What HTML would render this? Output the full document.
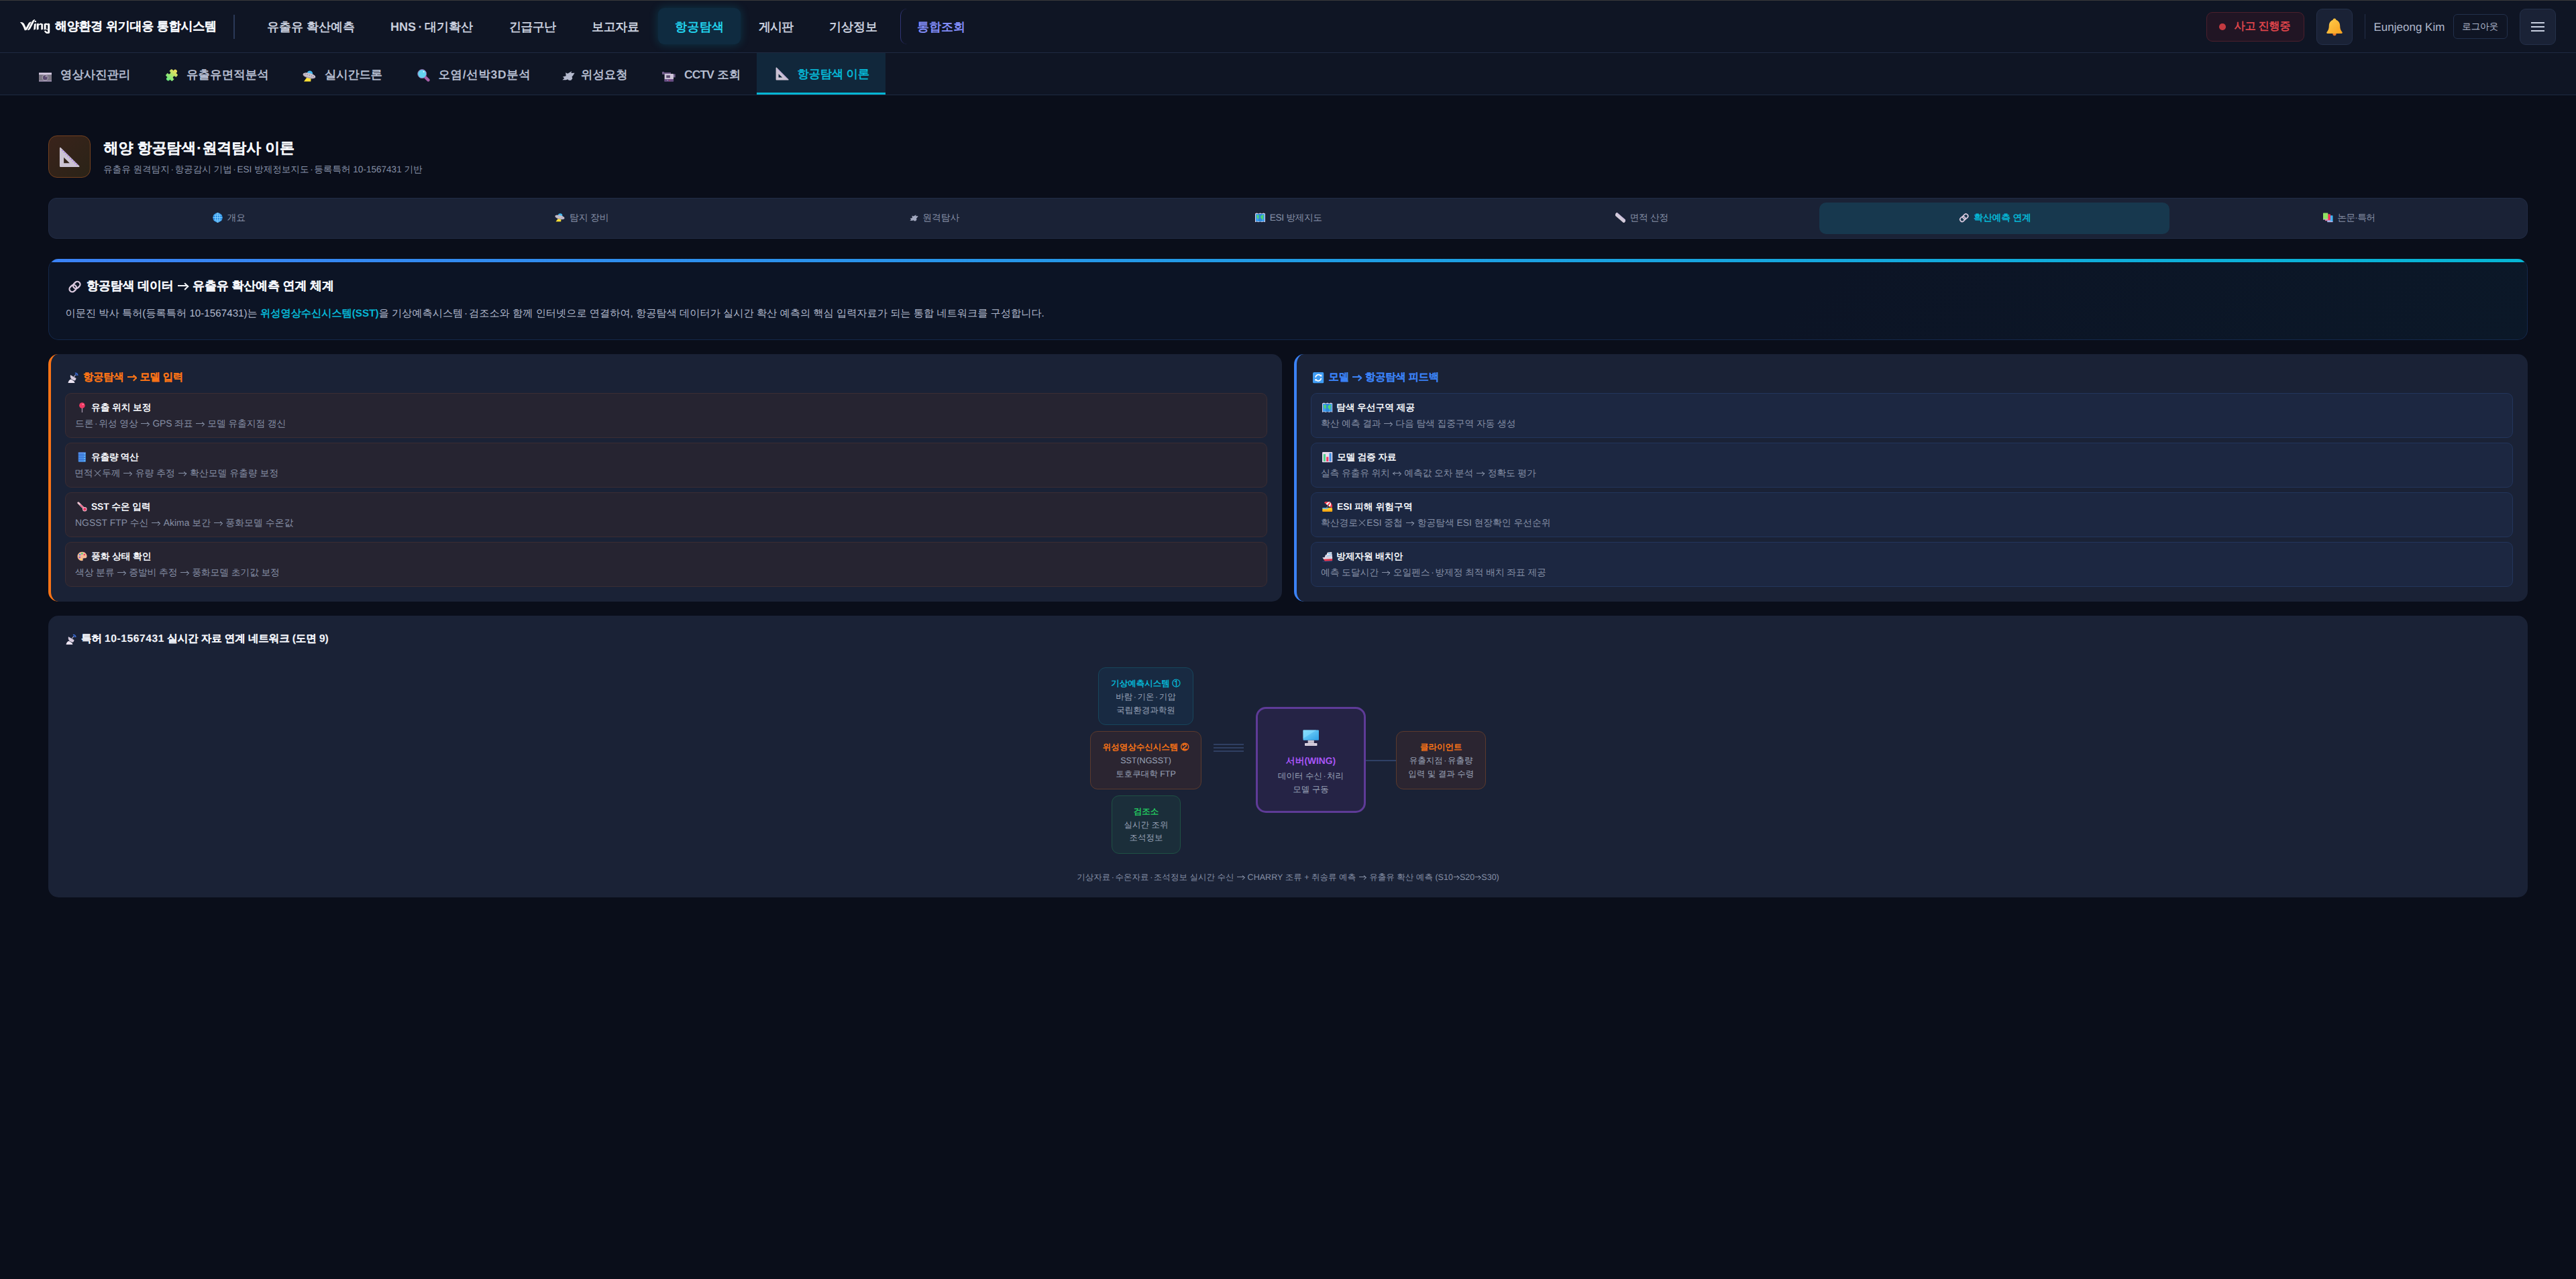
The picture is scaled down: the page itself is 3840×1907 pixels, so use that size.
<!DOCTYPE html>
<html lang="ko">
<head>
<meta charset="utf-8">
<title>해양환경 위기대응 통합시스템</title>
<style>
*{box-sizing:border-box;margin:0;padding:0}
html,body{width:3840px;height:1907px;overflow:hidden;background:#0a0e1a}
body{position:relative;font-family:"Liberation Sans",sans-serif;color:#edf0f7;-webkit-font-smoothing:antialiased;text-rendering:geometricPrecision}
.abs{position:absolute}
.t{position:absolute;white-space:nowrap;line-height:1}
svg{display:block;overflow:visible}
.ic{position:absolute}
/* top nav */
#topnav{position:absolute;left:0;top:0;width:3840px;height:78px;background:#0f1524}
#line1{position:absolute;left:0;top:78px;width:3840px;height:1px;background:#1e2a42}
#subnav{position:absolute;left:0;top:79px;width:3840px;height:62px;background:#0f1524}
#line2{position:absolute;left:0;top:141px;width:3840px;height:1px;background:#1e2a42}
#topline{position:absolute;left:0;top:0;width:3840px;height:1px;background:#3a3a3a}
.nav{font-size:18px;font-weight:700;color:#c8cedd;top:31px}
.sub{font-size:17.4px;font-weight:700;color:#b4bccf;top:103px}
.box{position:absolute;border-radius:9px}
.d{margin:0 .12em}

.card{position:absolute;background:#1a2236;border-radius:15px}
.tab{position:absolute;top:302px;width:522px;height:47px;display:flex;align-items:center;justify-content:center;font-size:13.8px;color:#8690a6;white-space:nowrap;line-height:1}
.tab svg{margin-right:6.5px;flex:none;position:relative;top:-.8px}
.tab span{position:relative;top:-.5px}
.ph{font-size:15.4px;font-weight:700;-webkit-text-stroke:.12px currentColor}
.item{position:absolute;height:66.5px;border-radius:9px;border:1px solid}
.li{left:97px;width:1792px;background:#262431;border-color:#3b2d33}
.ri{left:1954px;width:1792px;background:#1c2741;border-color:#22355c}
.it{font-size:13.8px;font-weight:700;color:#f6f8fc}
.id{font-size:13.8px;color:#8690a6}
.node{position:absolute;border:1px solid;border-radius:11px;text-align:center;font-size:12.5px;line-height:19.8px;color:#9aa3b8;white-space:nowrap}
.node b{display:block;font-weight:700}

.ar,.xx{display:inline-block;position:relative;width:1.04em;height:.8em;overflow:hidden;text-indent:-9em;vertical-align:-.1em;letter-spacing:0}
.ar:before{content:"";position:absolute;left:.07em;right:.1em;top:50%;margin-top:-.04em;border-top:.08em solid currentColor}
.ar:after{content:"";position:absolute;right:.12em;top:50%;width:.3em;height:.3em;margin-top:-.15em;border-top:.08em solid currentColor;border-right:.08em solid currentColor;transform:rotate(45deg)}
.ar.lr i{position:absolute;left:.12em;top:50%;width:.3em;height:.3em;margin-top:-.15em;border-bottom:.08em solid currentColor;border-left:.08em solid currentColor;transform:rotate(45deg)}
b .ar:before,.bd .ar:before{border-top-width:.13em;margin-top:-.065em}
.bd .ar:after{border-width:.13em .13em 0 0;width:.32em;height:.32em;margin-top:-.16em}
.xx{width:.96em}
.xx:before,.xx:after{content:"";position:absolute;left:.02em;right:.02em;top:50%;margin-top:-.035em;border-top:.07em solid currentColor}
.xx:before{transform:rotate(45deg)}.xx:after{transform:rotate(-45deg)}
.ars{width:.8em}
</style>
</head>
<body>
<svg width="0" height="0" style="position:absolute">
<defs>
<linearGradient id="g-pz" gradientUnits="userSpaceOnUse" x1="10" y1="19" x2="10" y2="1"><stop offset="0" stop-color="#6be97f"/><stop offset="1" stop-color="#efdf5c"/></linearGradient>
<linearGradient id="g-bell" x1="0" y1="0" x2="1" y2="1"><stop offset="0" stop-color="#ffcf4d"/><stop offset="1" stop-color="#f9a01f"/></linearGradient>
<linearGradient id="g-mon" x1="0" y1="0" x2="1" y2="1"><stop offset="0" stop-color="#7fdcff"/><stop offset="1" stop-color="#2d9fe6"/></linearGradient>
<symbol id="i-camera" viewBox="0 0 19 14"><rect x="0" y=".4" width="19" height="3.3" fill="#dccfe8"/><rect x="0" y="3.5" width="19" height="9" fill="#7b7684"/><rect y="12.3" width="19" height="1.2" fill="#c9b5dc"/><circle cx="9.3" cy="7.8" r="4.7" fill="#a8a1b1"/><circle cx="9.3" cy="7.8" r="3.5" fill="#5b4c70"/><circle cx="10.7" cy="6" r=".8" fill="#eee6f4"/></symbol>
<symbol id="i-puzzle" viewBox="0 0 20 20"><g transform="rotate(43 10 10)" fill="url(#g-pz)"><rect x="3.4" y="3.4" width="13.2" height="13.2" rx="1.3"/><circle cx="10" cy="2.3" r="2.7"/><circle cx="10" cy="17.7" r="2.7"/><circle cx="4.5" cy="10" r="2.2" fill="#0f1524"/><circle cx="15.5" cy="10" r="2.2" fill="#0f1524"/></g></symbol>
<symbol id="i-ufo" viewBox="0 0 20 17"><polygon points="6.6,10.2 12.6,11 12.3,16.6 2,16.6" fill="#ffe135"/><circle cx="10.9" cy="4.7" r="4.3" fill="#44baf0"/><ellipse cx="9.9" cy="8" rx="9.7" ry="3.8" transform="rotate(14 9.9 8)" fill="#a9a1ae"/><ellipse cx="10.1" cy="7.2" rx="9.3" ry="3" transform="rotate(14 10.1 7.2)" fill="#c9c2ce"/><g fill="#5b5068"><circle cx="4" cy="5.4" r=".6"/><circle cx="7" cy="6.2" r=".6"/><circle cx="10.2" cy="7.1" r=".6"/><circle cx="13.3" cy="8" r=".6"/><circle cx="16" cy="8.9" r=".6"/></g></symbol>
<symbol id="i-mag" viewBox="0 0 19 19"><path d="M12.2 12.2L16.4 16.4" stroke="#a55fa7" stroke-width="4.4" stroke-linecap="round"/><circle cx="7.2" cy="7.1" r="6.5" fill="#64d2ef" stroke="#9c62a8" stroke-width=".9"/><circle cx="9.6" cy="3.9" r="1" fill="#e8f8ff"/></symbol>
<symbol id="i-sat" viewBox="0 0 19 15"><polygon fill="currentColor" points="0.3,13.2 3.3,10.8 0.9,8.4 5.7,7.2 5.2,2.2 8.2,3.8 12,1.6 14.3,0.3 13.3,3.1 18.6,2.8 16.3,6.6 14.5,8.4 15.4,11 13.2,13.8 10,13.8 8.2,12.2 5.7,13.2"/></symbol>
<symbol id="i-cctv" viewBox="0 0 20 15"><rect x="0" y="0" width="3" height="4" fill="#6d5a86"/><rect x="2.5" y="1" width="10.5" height="3" fill="#6b5685"/><rect x="16.5" y="3.4" width="3.2" height="5" fill="#73608b"/><rect x="3.6" y="3" width="13.4" height="8.6" rx="1" fill="#cdc4d8"/><rect x="6.3" y="5.3" width="5.6" height="3.8" fill="#5a4a6e"/><rect x="3.2" y="11" width="14" height="3.8" rx=".8" fill="#684e84"/><rect x="10.7" y="12" width=".9" height="1.6" fill="#e0315a"/><circle cx="8.2" cy="12.7" r=".6" fill="#cdbfe0"/></symbol>
<symbol id="i-ruler3" viewBox="0 0 20 20"><path fill-rule="evenodd" fill="#cbc3d3" d="M1.6 .6 L19.6 18.4 Q19.9 19.4 19 19.4 L1.5 19.4 Q.6 19.4 .6 18.5 L.6 1.2 Q.8 .2 1.6 .6 Z M4.6 10.2 L4.6 15.6 L10.2 15.6 Z"/><path d="M3 3.2L17.5 17.6" stroke="#a06cf0" stroke-width="1" stroke-dasharray="1 1.4"/></symbol>
<symbol id="i-bell" viewBox="0 0 26 27"><circle cx="13" cy="23.6" r="2.6" fill="#e8782a"/><path fill="url(#g-bell)" d="M13 .5c1.4 0 2.3 1 2.4 2.2 3.7 1.2 5.8 4.4 5.8 8.8 0 4.600 1.300 7 3.200 9.300 .800 1 .300 2.200-1 2.200H2.600c-1.300 0-1.800-1.200-1-2.200 1.900-2.300 3.200-4.700 3.200-9.300 0-4.400 2.100-7.600 5.800-8.800C10.700 1.500 11.600 .5 13 .5z"/></symbol>
<symbol id="i-globe" viewBox="0 0 15 15"><circle cx="7.5" cy="7.5" r="7.2" fill="#2b8fe6"/><g fill="none" stroke="#8ad6ff" stroke-width=".9"><ellipse cx="7.5" cy="7.5" rx="3.3" ry="7"/><path d="M7.5 .5V14.500M.6 7.500H14.400M1.600 3.900H13.400M1.600 11.100H13.400"/></g></symbol>
<symbol id="i-ufo2" viewBox="0 0 20 17"><use href="#i-ufo"/></symbol>
<symbol id="i-sat2" viewBox="0 0 19 15"><g color="#a2a8bf"><use href="#i-sat"/></g></symbol>
<symbol id="i-map" viewBox="0 0 15 15"><path fill="#e6d8ec" d="M0 1.400 2.500.600 5 1.400 7.500.600 10 1.400 12.500.600 15 1.400V14.200L12.500 13.500 10 14.300 7.500 13.500 5 14.300 2.500 13.500 0 14.300Z"/><rect x=".9" y="1.900" width="13.200" height="11.300" fill="#3e9ceb"/><rect x="5" y="1.900" width="5" height="11.300" fill="#2f89db"/><path fill="#4fd472" d="M2 4.500 4 3.500 6 4 5.200 6 6 8 4 9.500 3 8 2.500 6ZM8 6 9.500 4 12.500 3.500 13 5 11.500 6.500 12.500 9 11 10.500 9.500 9 8.500 8Z"/></symbol>
<symbol id="i-ruler" viewBox="0 0 15 15"><g transform="rotate(41 7.5 7.5)"><rect x="-1.800" y="4.900" width="18.600" height="5.400" rx=".8" fill="#d2cad9"/><path d="M0 5.500H15.500" stroke="#b48cf5" stroke-width=".9" stroke-dasharray=".8 1.300"/></g></symbol>
<symbol id="i-link" viewBox="0 0 21 21"><g fill="none" stroke="#dccbe0" stroke-width="2.300" transform="rotate(-42 10.500 10.500)"><rect x="1.200" y="6.300" width="11.200" height="8.400" rx="4.200"/><rect x="8.600" y="6.300" width="11.200" height="8.400" rx="4.200"/></g></symbol>
<symbol id="i-books" viewBox="0 0 15 15"><rect x="6.200" y="4.200" width="8.300" height="9.500" rx=".6" fill="#42b6f7"/><rect x="6.200" y="12.900" width="8.300" height="1.300" fill="#c9b8f0"/><rect x="3" y="2.300" width="8" height="9.500" rx=".6" fill="#ef315f"/><rect x="3" y="11" width="8" height="1.200" fill="#e889b0"/><rect x="0" y=".4" width="7.300" height="9.600" rx=".6" fill="#8fe262"/><rect x="0" y="9.400" width="7.300" height="1.200" fill="#c8c0d0"/></symbol>
<symbol id="i-dish" viewBox="0 0 16 16"><path fill="#ece4f2" d="M.5 16C1 12.500 2.500 11 5 10.500L9.500 13.500 10.500 16Z"/><path fill="#d6cbde" d="M4 4C3 8 5 11.500 10.500 12.500 12 11.500 12.500 10 12.500 9Z"/><path d="M8.500 8 11.500 3.800" stroke="#bdb3c8" stroke-width="1.100"/><path fill="none" stroke="#3f74e6" stroke-width="1.300" d="M10.800 1.200C12.800 1.200 14.600 2.600 15 4.800M11.200 3.200C12.200 3.300 12.800 3.900 13 4.800"/></symbol>
<symbol id="i-sync" viewBox="0 0 16 16"><rect width="16" height="16" rx="2" fill="#3f9cf3"/><g fill="none" stroke="#fff" stroke-width="1.700"><path d="M4 7.500A4.200 4.200 0 0 1 11.500 5.200"/><path d="M12 8.500A4.200 4.200 0 0 1 4.500 10.800"/></g><path fill="#fff" d="M9.800 5.800 13 6.400 12.600 3ZM6.200 10.200 3 9.600 3.400 13Z"/></symbol>
<symbol id="i-pin" viewBox="0 0 15 15"><rect x="6.800" y="7.500" width="1.300" height="7.500" fill="#a394ab"/><circle cx="7.400" cy="4.500" r="4.300" fill="#f03a65"/><circle cx="8.700" cy="3" r="1.100" fill="#ff8fa8"/></symbol>
<symbol id="i-barrel" viewBox="0 0 15 15"><rect x="1.800" y=".5" width="11" height="14.200" rx=".8" fill="#4a90e8"/><path d="M1.800 4.400H12.800M1.800 7.800H12.800M1.800 11.200H12.800" stroke="#3768cc" stroke-width="1.100"/><path d="M11.200 2V3.500M11.200 5.500V7M11.200 9V10.400M11.200 12.300V13.500" stroke="#7ff0ff" stroke-width="1.100"/><rect x="1.800" y=".5" width="11" height="1.300" fill="#5f86e0"/></symbol>
<symbol id="i-thermo" viewBox="0 0 15 15"><path d="M1.800 1.800 10.500 10.500" stroke="#edc3d1" stroke-width="3" stroke-linecap="round"/><path d="M4.500 4.500 10.500 10.500" stroke="#ef3f6b" stroke-width="1.300"/><circle cx="11.300" cy="11.300" r="3.200" fill="#edc3d1"/><circle cx="11.300" cy="11.300" r="2.200" fill="#ee3565"/></symbol>
<symbol id="i-palette" viewBox="0 0 15 15"><path fill="#f5b994" d="M7.500.800C3.500.800.500 3.700.500 7.500.500 11.300 3.500 14.200 7 14.200 8.600 14.200 9 13.200 8.600 12.200 8.200 11 9 10.200 10.200 10.200H12C13.600 10.200 14.500 9 14.500 7.500 14.500 3.700 11.500.800 7.500.800Z"/><circle cx="4" cy="5" r="1.300" fill="#4a90e8"/><circle cx="7.300" cy="3.400" r="1.300" fill="#4fd472"/><circle cx="10.800" cy="5" r="1.300" fill="#ef3f6b"/><circle cx="3.800" cy="9" r="1.300" fill="#8c5fd8"/><circle cx="6" cy="11.800" r="1.100" fill="#ffd84a"/></symbol>
<symbol id="i-chart" viewBox="0 0 15 15"><rect width="15" height="15" rx="1.300" fill="#e7dcec"/><rect x="1.800" y="3" width="3" height="10.500" fill="#4fd28c"/><rect x="6" y="7" width="3" height="6.500" fill="#f03a65"/><rect x="10.200" y="1.500" width="3" height="12" fill="#3d8fe8"/></symbol>
<symbol id="i-beach" viewBox="0 0 15 15"><rect x=".3" y="8.6" width="14.4" height="6" rx="1.6" fill="#ffc425"/><path d="M.3 12.6h14.4v.4a1.600 1.600 0 0 1-1.600 1.600H1.900A1.600 1.600 0 0 1 .3 13z" fill="#f0a010"/><rect x=".3" y="8.600" width="8.500" height="1.700" rx=".8" fill="#55baf2"/><path d="M4.300 11.800 8.300 6" stroke="#c9a37a" stroke-width=".8"/><g transform="rotate(35 8.500 5)"><path d="M1.800 5.500A6.700 5.700 0 0 1 15.200 5.500Z" fill="#ef3d4f"/><path d="M5 5.500A3.500 5.700 0 0 1 8.500 -.2 3.500 5.700 0 0 1 12 5.500Z" fill="#fff"/><path d="M7.300 5.500A1.200 5.700 0 0 1 8.500 -.2 1.200 5.700 0 0 1 9.700 5.500Z" fill="#ef3d4f"/></g></symbol>
<symbol id="i-ship" viewBox="0 0 15 15"><path fill="#f3eef6" d="M7.500 1.800 13.800 1V4.300L6.300 5Z"/><path fill="#e9e1ef" d="M4.800 5 14.300 4V8L3.500 8.800Z"/><path d="M6.500 6.600 13.500 6" stroke="#45b4ee" stroke-width="1" stroke-dasharray="1.100 .7"/><path d="M8.500 3.300 13 2.900" stroke="#45b4ee" stroke-width=".9"/><path fill="#e4dbe9" d="M.3 8.900 14.700 7.800V11.200L2.200 11.600Z"/><path fill="#e8394f" d="M1.800 11.400 14.700 11V13.600L3.800 14.200Z"/><path d="M.5 14.700H14.500" stroke="#3d6fd8" stroke-width=".6"/></symbol>
<symbol id="i-monitor" viewBox="0 0 24 24"><rect x=".5" y=".5" width="23" height="15" rx="1" fill="url(#g-mon)"/><path fill="#8fe2ff" opacity=".5" d="M.5.500H20L.500 13Z"/><rect x="7.500" y="15.500" width="9" height="4" fill="#c9c2d0"/><rect x="3" y="19.500" width="18" height="4" rx=".8" fill="#ded6e4"/><path d="M5 21.500H19" stroke="#9b93a6" stroke-width=".8" stroke-dasharray="1.200 .8"/></symbol>
</defs>
</svg>

<div id="topnav"></div>
<div id="topline"></div>
<div id="line1"></div>
<div id="subnav"></div>
<div id="line2"></div>

<!-- TOPNAV -->
<svg class="ic" id="logo" style="left:24px;top:20px" width="64" height="38" viewBox="0 0 2154 1279"><g fill="#fff"><path d="M195 440C260 422 355 440 405 520L505 735L428 850C400 760 330 560 195 440Z"/><path d="M428 850L615 505C665 440 720 416 768 425L700 550L556 806C520 842 462 857 428 850Z"/><path d="M572 842L800 400C850 320 900 293 952 300L866 480L716 762C680 818 625 848 572 842Z"/><circle cx="968" cy="408" r="42"/><path d="M905 530L1005 498L978 790L882 832Z"/><path d="M1035 522L1130 490V545L1235 490L1345 532V800L1255 822V575L1215 562L1130 605V800L1035 822Z"/><path d="M1400 532L1500 490L1590 522V490L1690 522V940C1690 990 1640 1012 1590 1012C1500 1012 1440 960 1410 880L1480 858C1500 900 1540 930 1590 930V822L1500 800L1400 822ZM1500 560V770L1590 790V585Z"/></g></svg>
<div class="t" id="brand" style="left:82.0px;top:29.5px;font-size:18px;font-weight:700;color:#f4f6fb;-webkit-text-stroke:.2px #f4f6fb;letter-spacing:-0.215px">해양환경 위기대응 통합시스템</div>
<div class="abs" style="left:348px;top:22px;width:1.5px;height:36px;background:#2a3958"></div>
<div class="box" style="left:981px;top:12px;width:123px;height:54px;background:#0f2b40;box-shadow:0 0 14px rgba(6,182,212,.22)"></div>
<div class="t nav" id="n1" style="left:398.0px;letter-spacing:-0.0px">유출유 확산예측</div>
<div class="t nav" id="n2" style="left:582.0px;letter-spacing:-0.0px">HNS<span style="margin:0 3.5px">·</span>대기확산</div>
<div class="t nav" id="n3" style="left:759.0px;letter-spacing:-0.667px">긴급구난</div>
<div class="t nav" id="n4" style="left:882.0px;letter-spacing:-0.333px">보고자료</div>
<div class="t nav" id="n5" style="left:1006.0px;color:#22d3ee;letter-spacing:0.333px">항공탐색</div>
<div class="t nav" id="n6" style="left:1131.0px;letter-spacing:-1.0px">게시판</div>
<div class="t nav" id="n7" style="left:1236.0px;letter-spacing:0.0px">기상정보</div>
<div class="abs" style="left:1342px;top:13px;width:130px;height:53px;border-left:1.5px solid rgba(99,102,241,.4);border-radius:10px"></div>
<div class="t nav" id="n8" style="left:1367.0px;color:#818cf8;letter-spacing:0.0px">통합조회</div>

<div class="box" style="left:3289px;top:18px;width:146px;height:44px;background:#211524;border:1px solid #4b1f2c"></div>
<div class="abs" style="left:3308px;top:35px;width:9.5px;height:9.5px;border-radius:50%;background:#c33a40"></div>
<div class="t" id="alert" style="left:3330.5px;top:31.3px;font-size:16.3px;font-weight:700;color:#dc444a;letter-spacing:-0.4px">사고 진행중</div>
<div class="box" style="left:3453px;top:13px;width:54px;height:54px;background:#1a2236;border:1px solid #243049"></div>
<svg class="ic" style="left:3467px;top:27px" width="26" height="27" viewBox="0 0 26 27"><use href="#i-bell"/></svg>
<div class="abs" style="left:3525px;top:21px;width:1px;height:37px;background:#222e48"></div>
<div class="t" id="user" style="left:3538.5px;top:32px;font-size:17px;color:#b0b8cc;letter-spacing:0.0px">Eunjeong Kim</div>
<div class="abs" style="left:3657px;top:21px;width:81px;height:37px;border:1px solid #22304b;border-radius:6px"></div>
<div class="t" id="logout" style="left:3670.0px;top:32.7px;font-size:13.8px;color:#b0b8cc;letter-spacing:-0.333px">로그아웃</div>
<div class="box" style="left:3756px;top:13px;width:54px;height:54px;background:#1a2236;border:1px solid #243049"></div>
<div class="abs" style="left:3773px;top:32.8px;width:20px;height:2px;background:#c8cfe0"></div>
<div class="abs" style="left:3773px;top:39px;width:20px;height:2px;background:#c8cfe0"></div>
<div class="abs" style="left:3773px;top:45.3px;width:20px;height:2px;background:#c8cfe0"></div>
<!-- SUBNAV -->
<div class="abs" style="left:1128px;top:79px;width:192px;height:62px;background:#11273b;border-bottom:3.5px solid #06b6d4"></div>
<svg class="ic" style="left:58px;top:108.4px" width="19" height="14" viewBox="0 0 19 14"><use href="#i-camera"/></svg>
<div class="t sub" id="s1" style="left:90.0px;letter-spacing:0.0px">영상사진관리</div>
<svg class="ic" style="left:245.5px;top:102px" width="20" height="20" viewBox="0 0 20 20"><use href="#i-puzzle"/></svg>
<div class="t sub" id="s2" style="left:278.0px;letter-spacing:0.167px">유출유면적분석</div>
<svg class="ic" style="left:450.8px;top:105.4px" width="20" height="17" viewBox="0 0 20 17"><use href="#i-ufo"/></svg>
<div class="t sub" id="s3" style="left:484.0px;letter-spacing:-0.25px">실시간드론</div>
<svg class="ic" style="left:622px;top:102.8px" width="19" height="19" viewBox="0 0 19 19"><use href="#i-mag"/></svg>
<div class="t sub" id="s4" style="left:653.5px;letter-spacing:0.724px">오염/선박3D분석</div>
<svg class="ic" style="left:837.7px;top:105.8px;color:#b4b9cd" width="19" height="15" viewBox="0 0 19 15"><use href="#i-sat"/></svg>
<div class="t sub" id="s5" style="left:866.0px;letter-spacing:-0.001px">위성요청</div>
<svg class="ic" style="left:987px;top:107px" width="20" height="15" viewBox="0 0 20 15"><use href="#i-cctv"/></svg>
<div class="t sub" id="s6" style="left:1020.0px;letter-spacing:0.166px"><span style="letter-spacing:-.8px">CCTV</span> 조회</div>
<svg class="ic" style="left:1155.6px;top:100px" width="20" height="20" viewBox="0 0 20 20"><use href="#i-ruler3"/></svg>
<div class="t sub" id="s7" style="left:1188.5px;top:101.5px;color:#06b6d4;letter-spacing:-0.267px">항공탐색 이론</div>
<!-- CONTENT -->
<div class="abs" style="left:72px;top:201.7px;width:63px;height:63px;border-radius:13px;background:linear-gradient(135deg,#3a231b,#2a2317);border:1px solid #74411f"></div>
<svg class="ic" style="left:88px;top:218.5px" width="31" height="31" viewBox="0 0 20 20"><use href="#i-ruler3"/></svg>
<div class="t" id="title" style="left:154.5px;top:209.8px;font-size:22px;font-weight:700;color:#f4f6fb;-webkit-text-stroke:.25px #f4f6fb;letter-spacing:-0.071px">해양 항공탐색<span style="margin:0 1px">·</span>원격탐사 이론</div>
<div class="t" id="subtitle" style="left:154.0px;top:245.5px;font-size:13.6px;color:#8690a6;letter-spacing:-0.022px">유출유 원격탐지<span class="d">·</span>항공감시 기법<span class="d">·</span>ESI 방제정보지도<span class="d">·</span>등록특허 10-1567431 기반</div>

<div class="abs" style="left:72px;top:295px;width:3696px;height:61px;border-radius:12px;background:#1a2236;border:1px solid #212c45"></div>
<div class="tab" style="left:80.5px"><svg width="15" height="15" viewBox="0 0 15 15"><use href="#i-globe"/></svg><span class="t" id="tb0" style="position:relative;letter-spacing:0.0px">개요</span></div>
<div class="tab" style="left:606.5px"><svg width="15" height="12.800" viewBox="0 0 20 17"><use href="#i-ufo2"/></svg><span class="t" id="tb1" style="position:relative;letter-spacing:-0.1px">탐지 장비</span></div>
<div class="tab" style="left:1132.0px"><svg width="13" height="10.3" viewBox="0 0 19 15"><use href="#i-sat2"/></svg><span class="t" id="tb2" style="position:relative;letter-spacing:0.0px">원격탐사</span></div>
<div class="tab" style="left:1660.0px"><svg width="15" height="15" viewBox="0 0 15 15"><use href="#i-map"/></svg><span class="t" id="tb3" style="position:relative;letter-spacing:-0.429px">ESI 방제지도</span></div>
<div class="tab" style="left:2186.5px"><svg width="15" height="15" viewBox="0 0 15 15"><use href="#i-ruler"/></svg><span class="t" id="tb4" style="position:relative;letter-spacing:-0.302px">면적 산정</span></div>
<div class="abs" style="left:2712px;top:302px;width:522px;height:47px;border-radius:10px;background:#17384e"></div>
<div class="tab" style="left:2713.0px;color:#06b6d4;font-weight:700"><svg width="15.500" height="15.500" viewBox="0 0 21 21"><use href="#i-link"/></svg><span class="t" id="tb5" style="position:relative;letter-spacing:-0.166px">확산예측 연계</span></div>
<div class="tab" style="left:3240.5px"><svg width="15" height="15" viewBox="0 0 15 15"><use href="#i-books"/></svg><span class="t" id="tb6" style="position:relative;letter-spacing:-0.75px">논문·특허</span></div>

<div class="abs" style="left:72px;top:386.3px;width:3696px;height:120.5px;border-radius:15px;overflow:hidden;background:linear-gradient(135deg,#0c1425 70%,#0b1828);border:1px solid #14284a;border-top:none"><div style="height:4.6px;margin:0 -1px;background:linear-gradient(90deg,#3b82f6,#06b6d4)"></div></div>
<svg class="ic" style="left:100.5px;top:417px" width="21" height="21" viewBox="0 0 21 21"><use href="#i-link"/></svg>
<div class="t bd" id="h1" style="left:129.0px;top:416.5px;font-size:18px;font-weight:700;color:#f4f6fb;-webkit-text-stroke:.15px #f4f6fb;letter-spacing:-0.167px">항공탐색 데이터 <span class="ar">→</span> 유출유 확산예측 연계 체계</div>
<div class="t" id="body" style="left:97.5px;top:459.5px;font-size:15.2px;color:#b0b8cc;letter-spacing:0.008px">이문진 박사 특허(등록특허 10-1567431)는 <b style="color:#06b6d4">위성영상수신시스템(SST)</b>을 기상예측시스템<span class="d">·</span>검조소와 함께 인터넷으로 연결하여, 항공탐색 데이터가 실시간 확산 예측의 핵심 입력자료가 되는 통합 네트워크를 구성합니다.</div>

<div class="card" style="left:72px;top:528.3px;width:1839px;height:368.5px;border-left:4.5px solid #f97316"></div>
<div class="card" style="left:1929.3px;top:528.3px;width:1839px;height:368.5px;border-left:4.5px solid #3b82f6"></div>
<svg class="ic" style="left:100.5px;top:555px" width="16" height="16" viewBox="0 0 16 16"><use href="#i-dish"/></svg>
<div class="t ph bd" id="lh" style="left:124.0px;top:555px;color:#f97316;letter-spacing:-0.274px">항공탐색 <span class="ar">→</span> 모델 입력</div>
<svg class="ic" style="left:1956.8px;top:555px" width="16.5" height="16.5" viewBox="0 0 16 16"><use href="#i-sync"/></svg>
<div class="t ph bd" id="rh" style="left:1980.5px;top:555px;color:#3b82f6;letter-spacing:-0.25px">모델 <span class="ar">→</span> 항공탐색 피드백</div>
<div class="item li" style="top:586.25px"></div>
<svg class="ic" style="left:115px;top:599.75px" width="15" height="15" viewBox="0 0 15 15"><use href="#i-pin"/></svg>
<div class="t it" id="lt0" style="left:136.0px;top:601.25px;letter-spacing:-0.142px">유출 위치 보정</div>
<div class="t id" id="ld0" style="left:112.0px;top:624.75px;letter-spacing:-0.104px">드론<span class="d">·</span>위성 영상 <span class="ar">→</span> GPS 좌표 <span class="ar">→</span> 모델 유출지점 갱신</div>
<div class="item ri" style="top:586.25px"></div>
<svg class="ic" style="left:1970.8px;top:599.75px" width="15.5" height="15.5" viewBox="0 0 15 15"><use href="#i-map"/></svg>
<div class="t it" id="rt0" style="left:1992.0px;top:601.25px;letter-spacing:-0.111px">탐색 우선구역 제공</div>
<div class="t id" id="rd0" style="left:1969.0px;top:624.75px;letter-spacing:-0.116px">확산 예측 결과 <span class="ar">→</span> 다음 탐색 집중구역 자동 생성</div>
<div class="item li" style="top:660.25px"></div>
<svg class="ic" style="left:115px;top:673.75px" width="15" height="15" viewBox="0 0 15 15"><use href="#i-barrel"/></svg>
<div class="t it" id="lt1" style="left:136.0px;top:675.25px;letter-spacing:-0.4px">유출량 역산</div>
<div class="t id" id="ld1" style="left:111.0px;top:698.75px;letter-spacing:0.039px">면적<span class="xx">×</span>두께 <span class="ar">→</span> 유량 추정 <span class="ar">→</span> 확산모델 유출량 보정</div>
<div class="item ri" style="top:660.25px"></div>
<svg class="ic" style="left:1970.8px;top:673.75px" width="15.5" height="15.5" viewBox="0 0 15 15"><use href="#i-chart"/></svg>
<div class="t it" id="rt1" style="left:1993.0px;top:675.25px;letter-spacing:-0.285px">모델 검증 자료</div>
<div class="t id" id="rd1" style="left:1969.0px;top:698.75px;letter-spacing:-0.172px">실측 유출유 위치 <span class="ar lr">↔<i></i></span> 예측값 오차 분석 <span class="ar">→</span> 정확도 평가</div>
<div class="item li" style="top:734.25px"></div>
<svg class="ic" style="left:115px;top:747.75px" width="15" height="15" viewBox="0 0 15 15"><use href="#i-thermo"/></svg>
<div class="t it" id="lt2" style="left:136.0px;top:749.25px;letter-spacing:-0.127px">SST 수온 입력</div>
<div class="t id" id="ld2" style="left:112.0px;top:772.75px;letter-spacing:0.091px">NGSST FTP 수신 <span class="ar">→</span> Akima 보간 <span class="ar">→</span> 풍화모델 수온값</div>
<div class="item ri" style="top:734.25px"></div>
<svg class="ic" style="left:1970.8px;top:747.75px" width="15.5" height="15.5" viewBox="0 0 15 15"><use href="#i-beach"/></svg>
<div class="t it" id="rt2" style="left:1993.0px;top:749.25px;letter-spacing:0.0px">ESI 피해 위험구역</div>
<div class="t id" id="rd2" style="left:1969.0px;top:772.75px;letter-spacing:-0.032px">확산경로<span class="xx">×</span>ESI 중첩 <span class="ar">→</span> 항공탐색 ESI 현장확인 우선순위</div>
<div class="item li" style="top:808.25px"></div>
<svg class="ic" style="left:115px;top:821.75px" width="15" height="15" viewBox="0 0 15 15"><use href="#i-palette"/></svg>
<div class="t it" id="lt3" style="left:136.0px;top:823.25px;letter-spacing:-0.142px">풍화 상태 확인</div>
<div class="t id" id="ld3" style="left:112.0px;top:846.75px;letter-spacing:-0.112px">색상 분류 <span class="ar">→</span> 증발비 추정 <span class="ar">→</span> 풍화모델 초기값 보정</div>
<div class="item ri" style="top:808.25px"></div>
<svg class="ic" style="left:1970.8px;top:821.75px" width="15.5" height="15.5" viewBox="0 0 15 15"><use href="#i-ship"/></svg>
<div class="t it" id="rt3" style="left:1992.0px;top:823.25px;letter-spacing:-0.143px">방제자원 배치안</div>
<div class="t id" id="rd3" style="left:1969.0px;top:846.75px;letter-spacing:-0.104px">예측 도달시간 <span class="ar">→</span> 오일펜스<span class="d">·</span>방제정 최적 배치 좌표 제공</div>

<div class="card" style="left:72px;top:918px;width:3696px;height:420.3px"></div>
<svg class="ic" style="left:97.5px;top:944.5px" width="16" height="16.5" viewBox="0 0 16 16"><use href="#i-dish"/></svg>
<div class="t ph" id="dh" style="left:121.0px;top:945.3px;font-size:15.55px;color:#f1f3f9;letter-spacing:-0.117px">특허 <span style="letter-spacing:.6px">10-1567431</span> 실시간 자료 연계 네트워크 (도면 9)</div>

<div class="node" id="nd1" style="left:1637px;top:995px;width:142px;height:85.8px;padding-top:14px;background:#182a42;border-color:#17465c"><b style="color:#06b6d4">기상예측시스템 ①</b>바람<span class="d">·</span>기온<span class="d">·</span>기압<br>국립환경과학원</div>
<div class="node" id="nd2" style="left:1625px;top:1090px;width:166px;height:86.8px;padding-top:14px;background:#2b2531;border-color:#5b3a2d"><b style="color:#f97316">위성영상수신시스템 ②</b>SST(NGSST)<br>토호쿠대학 FTP</div>
<div class="node" id="nd3" style="left:1657px;top:1185.8px;width:103px;height:87.2px;padding-top:14px;background:#1b2e3a;border-color:#1f5144"><b style="color:#22c55e">검조소</b>실시간 조위<br>조석정보</div>
<div class="abs" style="left:1808.8px;top:1108.7px;width:45.5px;height:2px;background:#2f3f62"></div>
<div class="abs" style="left:1808.8px;top:1113.7px;width:45.5px;height:2px;background:#2f3f62"></div>
<div class="abs" style="left:1808.8px;top:1118.6px;width:45.5px;height:2px;background:#2f3f62"></div>
<div class="node" id="nd4" style="left:1872px;top:1053.8px;width:164.3px;height:158.7px;border-width:3px;border-radius:15px;background:#252345;border-color:#5e3b97"></div>
<svg class="ic" style="left:1942px;top:1088px" width="24.5" height="24.5" viewBox="0 0 24 24"><use href="#i-monitor"/></svg>
<div class="t" id="sv1" style="left:1872px;width:164px;text-align:center;top:1127.5px;font-size:13.8px;font-weight:700;color:#a855f7">서버(WING)</div>
<div class="t" id="sv2" style="left:1872px;width:164px;text-align:center;top:1151px;font-size:12.5px;color:#9aa3b8">데이터 수신<span class="d">·</span>처리</div>
<div class="t" id="sv3" style="left:1872px;width:164px;text-align:center;top:1170.5px;font-size:12.5px;color:#9aa3b8">모델 구동</div>
<div class="abs" style="left:2036px;top:1133px;width:45.5px;height:1.5px;background:#2f4166"></div>
<div class="node" id="nd5" style="left:2081.3px;top:1090px;width:133.8px;height:86.8px;padding-top:14px;background:#2b2531;border-color:#5b3a2d"><b style="color:#f97316">클라이언트</b>유출지점<span class="d">·</span>유출량<br>입력 및 결과 수령</div>
<div class="t" id="cap" style="left:1520px;width:800px;text-align:center;top:1301.5px;font-size:12.5px;color:#8690a6;letter-spacing:0.03px">기상자료<span class="d">·</span>수온자료<span class="d">·</span>조석정보 실시간 수신 <span class="ar">→</span> CHARRY 조류 + 취송류 예측 <span class="ar">→</span> 유출유 확산 예측 (S10<span class="ar ars">→</span>S20<span class="ar ars">→</span>S30)</div>

</body>
</html>
